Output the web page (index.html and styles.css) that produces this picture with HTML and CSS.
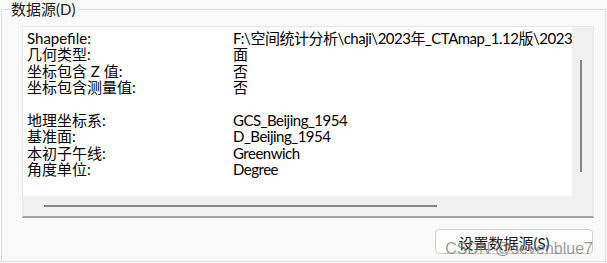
FILE: index.html
```html
<!DOCTYPE html>
<html lang="zh-CN">
<head>
<meta charset="utf-8">
<title>数据源</title>
<link rel="stylesheet" href="styles.css">
</head>
<body>
<div class="group">
  <span class="legend">数据源(D)</span>
  <div class="panel">
    <div class="content">
      <div class="row"><span class="label">Shapefile:</span><span class="value">F:\空间统计分析\chaji\2023年_CTAmap_1.12版\2023</span></div>
      <div class="row"><span class="label">几何类型:</span><span class="value">面</span></div>
      <div class="row"><span class="label">坐标包含 Z 值:</span><span class="value">否</span></div>
      <div class="row"><span class="label">坐标包含测量值:</span><span class="value">否</span></div>
      <div class="row"><span class="label">&nbsp;</span><span class="value"></span></div>
      <div class="row"><span class="label">地理坐标系:</span><span class="value">GCS_Beijing_1954</span></div>
      <div class="row"><span class="label">基准面:</span><span class="value">D_Beijing_1954</span></div>
      <div class="row"><span class="label">本初子午线:</span><span class="value">Greenwich</span></div>
      <div class="row"><span class="label">角度单位:</span><span class="value">Degree</span></div>
    </div>
    <div class="vscroll"><div class="vthumb"></div></div>
    <div class="hscroll"><div class="hthumb"></div></div>
    <div class="corner"></div>
  </div>
  <div class="actions">
    <button class="btn" type="button">设置数据源(S)</button>
  </div>
  <span class="watermark">CSDN @sevenblue7</span>
</div>
</body>
</html>
```

FILE: styles.css
```css
html, body {
  margin: 0;
  padding: 0;
}
body {
  width: 607px;
  height: 263px;
  background: #f9f9f9;
  font-family: Lato, "Noto Sans CJK SC", sans-serif;
  font-size: 15px;
  color: #000;
  overflow: hidden;
}
.group {
  position: relative;
  box-sizing: border-box;
  margin: 9px 1px 0 1px;
  height: 253px;
  border: 1px solid #dedede;
  padding: 16px 11px 0 20px;
}
.legend {
  position: absolute;
  top: -9px;
  left: 7px;
  padding: 0 2px;
  background: #f9f9f9;
  line-height: 17px;
  color: #1a1a1a;
}
.panel {
  box-sizing: border-box;
  height: 192px;
  border-top: 1px solid #e6e6e6;
  border-left: 1px solid #e6e6e6;
  border-right: 1px solid #e6e6e6;
  border-bottom: 2px solid #a3a3a3;
  display: grid;
  grid-template-columns: 1fr 21px;
  grid-template-rows: 169px 20px;
  background: #f0f0f0;
}
.content {
  background: #fff;
  padding: 3px 0 0 4px;
  overflow: hidden;
  white-space: nowrap;
}
.row {
  display: flex;
  line-height: 16.4px;
  height: 16.4px;
}
.label {
  width: 206px;
  flex: none;
}
.value {
  flex: none;
  letter-spacing: -0.5px;
}
.vscroll {
  background: #f0f0f0;
}
.vthumb {
  margin: 33px 0 0 8px;
  width: 2px;
  height: 112px;
  background: #878787;
}
.hscroll {
  background: #f0f0f0;
}
.hthumb {
  margin: 9px 0 0 21px;
  width: 393px;
  height: 2px;
  background: #878787;
}
.corner {
  background: #f0f0f0;
}
.actions {
  display: flex;
  justify-content: flex-end;
  margin-top: 11px;
  padding-right: 1px;
}
.btn {
  box-sizing: border-box;
  width: 158px;
  height: 25px;
  border: 1px solid #d0d0d0;
  border-radius: 4px;
  background: #fdfdfd;
  font-family: Lato, "Noto Sans CJK SC", sans-serif;
  font-size: 15px;
  line-height: 20px;
  color: #1a1a1a;
  padding: 2px 20px 0 0;
}
.watermark {
  position: absolute;
  right: 12px;
  bottom: 3px;
  font-family: "Liberation Sans", Arial, sans-serif;
  font-size: 16px;
  line-height: 18px;
  color: rgba(120, 120, 120, 0.75);
  pointer-events: none;
}
```
